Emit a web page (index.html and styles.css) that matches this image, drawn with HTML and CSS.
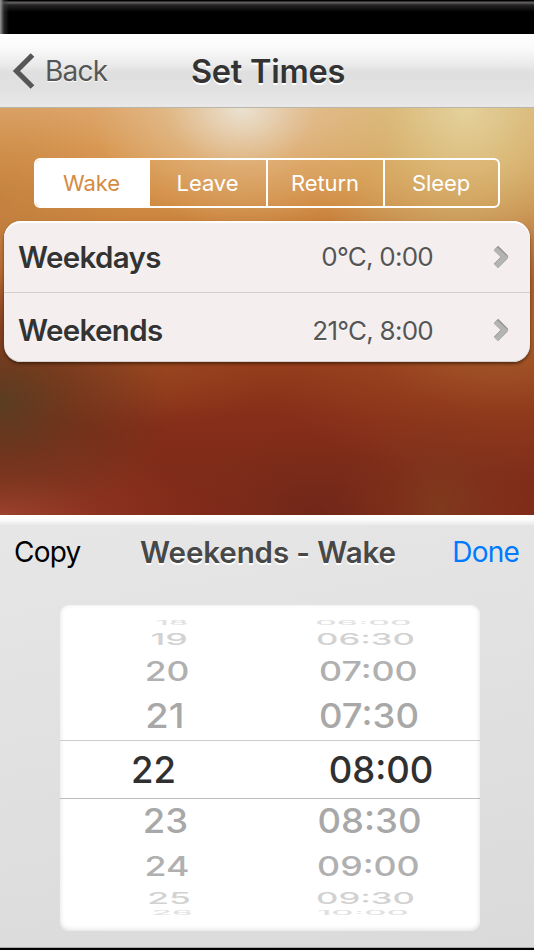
FILE: index.html
```
<!DOCTYPE html>
<html lang="en">
<head>
    <meta charset="UTF-8">
    <meta name="viewport" content="width=device-width, initial-scale=1.0">
    <title>Set Times</title>
    <link rel="stylesheet" href="styles.css">
</head>
<body>
    <div class="status"></div>
    <header class="navbar">
        <a class="back">
            <svg width="24" height="36" viewBox="0 0 24 36"><path d="M21.5 2 L5.5 18 L21.5 34" fill="none" stroke="#565656" stroke-width="5.2"/></svg>
            <span>Back</span>
        </a>
        <h1>Set Times</h1>
    </header>
    <main>
        <div class="tabs">
            <a class="tab active">Wake</a>
            <a class="tab">Leave</a>
            <a class="tab">Return</a>
            <a class="tab">Sleep</a>
        </div>
        <div class="list">
            <div class="item">
                <span class="day">Weekdays</span>
                <span class="value">0°C, 0:00</span>
                <svg class="arrow" width="18" height="26" viewBox="0 0 18 26"><path d="M4 3.8 L13 12.8 L4 21.8" fill="none" stroke="#929292" stroke-width="6" stroke-linejoin="round"/><path d="M3.5 5 L12.6 13.4 L4 22.3" fill="none" stroke="#b5b4b4" stroke-width="5"/></svg>
            </div>
            <div class="item">
                <span class="day">Weekends</span>
                <span class="value">21°C, 8:00</span>
                <svg class="arrow" width="18" height="26" viewBox="0 0 18 26"><path d="M4 3.8 L13 12.8 L4 21.8" fill="none" stroke="#929292" stroke-width="6" stroke-linejoin="round"/><path d="M3.5 5 L12.6 13.4 L4 22.3" fill="none" stroke="#b5b4b4" stroke-width="5"/></svg>
            </div>
        </div>
    </main>
    <section class="sheet">
        <div class="bar">
            <a class="copy">Copy</a>
            <h2>Weekends - Wake</h2>
            <a class="done">Done</a>
        </div>
        <div class="picker">
            <div class="row top4"><span>18</span><span>06:00</span></div>
            <div class="row top3"><span>19</span><span>06:30</span></div>
            <div class="row top2"><span>20</span><span>07:00</span></div>
            <div class="row top1"><span>21</span><span>07:30</span></div>
            <div class="row selected"><span>22</span><span>08:00</span></div>
            <div class="row bottom1"><span>23</span><span>08:30</span></div>
            <div class="row bottom2"><span>24</span><span>09:00</span></div>
            <div class="row bottom3"><span>25</span><span>09:30</span></div>
            <div class="row bottom4"><span>26</span><span>10:00</span></div>
        </div>
    </section>
</body>
</html>
```

FILE: styles.css
```
*{
    box-sizing: border-box;
}
body{
    margin: 0;
    width: 534px;
    height: 950px;
    overflow: hidden;
    display: flex;
    flex-direction: column;
    background-color: black;
    font-family: Inter, "Liberation Sans", sans-serif;
}
h1,h2{
    margin: 0;
    font-weight: 600;
    white-space: nowrap;
}
.status{
    height: 34px;
    background: linear-gradient(to right, #999 0, rgba(60,60,60,0.6) 4px, transparent 9px), linear-gradient(#000 0, #000 1px, #656065 2px, #5a575a 3px, #242424 5px, #000 12px);
}

/* navbar */
.navbar{
    height: 74px;
    display: grid;
    grid-template-columns: 160px 1fr 160px;
    align-items: center;
    padding-top: 1px;
    background: linear-gradient(#fff 0, #fafafa 14px, #e9e9e9 32px, #dfdfdf 38px, #e1e1e1 55px, #e8e8e8 72px);
    border-bottom: 1px solid #b9b5aa;
}
.back{
    display: flex;
    align-items: center;
    padding-left: 11px;
    gap: 10px;
    color: #565656;
    font-size: 28px;
    letter-spacing: -0.8px;
    text-shadow: 0 1px 0 white;
}
.navbar h1{
    text-align: center;
    padding-left: 2px;
    font-size: 32.5px;
    letter-spacing: -0.25px;
    color: #333;
    text-shadow: 0 2px 0 white;
}

/* blurred photo behind the list */
main{
    height: 407px;
    padding: 50px 4px 0;
    background:
        radial-gradient(ellipse 150px 120px at 242px 0, rgba(235,229,215,0.95), rgba(230,207,170,0.45) 50%, rgba(220,180,120,0) 100%),
        radial-gradient(ellipse 170px 190px at 465px 0, rgba(228,214,160,0.9), rgba(216,195,130,0.6) 50%, rgba(210,170,95,0) 100%),
        radial-gradient(ellipse 130px 110px at 0 95px, rgba(188,124,62,0.6), rgba(195,130,65,0) 100%),
        radial-gradient(ellipse 170px 130px at 0 295px, rgba(88,62,34,0.95), rgba(98,55,30,0.55) 45%, rgba(115,45,27,0) 100%),
        radial-gradient(ellipse 200px 90px at 0 407px, rgba(168,68,46,0.95), rgba(155,58,38,0.45) 50%, rgba(140,45,30,0) 100%),
        radial-gradient(ellipse 120px 90px at 315px 407px, rgba(105,38,24,0.7), rgba(112,40,24,0.3) 50%, rgba(120,42,24,0) 100%),
        radial-gradient(ellipse 100px 110px at 440px 400px, rgba(127,60,28,0.85), rgba(130,55,28,0.4) 50%, rgba(132,50,28,0) 100%),
        radial-gradient(ellipse 260px 160px at 500px 215px, rgba(172,105,48,0.8), rgba(160,80,35,0.35) 55%, rgba(150,70,30,0) 100%),
        radial-gradient(ellipse 170px 70px at 130px 250px, rgba(155,78,34,0.7), rgba(150,60,30,0) 100%),
        linear-gradient(#dca468 0, #d8964e 55px, #cd8740 105px, #a85a2a 180px, #943a1c 255px, #862e19 310px, #7f2c1a 360px, #802a1a 407px);
}
.tabs{
    width: 466px;
    height: 50px;
    margin: 0 auto;
    display: grid;
    grid-template-columns: 114px 116px 117px 115px;
    border: 2px solid white;
    border-radius: 6px;
    overflow: hidden;
    background-color: rgba(225,150,65,0.12);
}
.tab{
    display: flex;
    align-items: center;
    justify-content: center;
    padding-right: 1px;
    color: white;
    font-size: 22px;
    letter-spacing: -0.1px;
    border-left: 2px solid white;
}
.tab.active{
    padding-right: 3px;
    background-color: white;
    color: #d48b43;
    border-left: none;
}
.tab.active + .tab{
    border-left: none;
}
.list{
    height: 141px;
    margin-top: 13px;
    border-radius: 17px;
    background-color: #f4eeee;
    box-shadow: inset 0 2px 0 white, inset 0 -1px 0 #d5cfcf, 0 2px 3px rgba(40,20,0,0.6);
}
.item{
    display: grid;
    grid-template-columns: 200px 1fr 96px;
    align-items: center;
    height: 71px;
    padding-left: 14px;
}
.item + .item{
    border-top: 1px solid #d3cfcf;
    height: 70px;
    padding-top: 5px;
}
.day{
    font-size: 29.5px;
    font-weight: 600;
    letter-spacing: -0.65px;
    color: #333;
    text-shadow: 0 1px 0 white;
}
.value{
    text-align: right;
    padding-right: 1px;
    font-size: 26px;
    letter-spacing: -0.75px;
    color: #555;
    text-shadow: 0 1px 0 white;
}
.arrow{
    margin-left: 58px;
}

/* bottom sheet */
.sheet{
    height: 433px;
    border-bottom: 1px solid #aaa;
    background: linear-gradient(#fff 0, #fbfbfb 5px, #ececec 9px, transparent 11px), linear-gradient(170deg, #e6e6e6 20px, #dadada 100%);
}
.bar{
    height: 90px;
    padding: 0 15px 16px 14px;
    display: grid;
    grid-template-columns: 90px 1fr 90px;
    align-items: center;
    font-size: 28px;
    letter-spacing: -0.8px;
}
.bar h2{
    text-align: center;
    padding-left: 3px;
    font-size: 29.5px;
    letter-spacing: -0.1px;
    color: #484848;
    text-shadow: 0 2px 0 white;
}
.done{
    text-align: right;
    color: #007aff;
}
.picker{
    width: 420px;
    height: 326px;
    margin: 0 auto 0 60px;
    padding-top: 10px;
    border-radius: 9px;
    background-color: white;
    box-shadow: inset 0 -1px 5px #ddd;
}
.row{
    display: grid;
    grid-template-columns: 212px 1fr;
    grid-template-rows: 100%;
    align-items: center;
    font-size: 36.5px;
    font-weight: 500;
    line-height: 1;
    color: #a8a8a8;
}
.row span{
    justify-self: center;
}
.selected{
    height: 59px;
    border-top: 1px solid #ccc;
    border-bottom: 1px solid #bbb;
    margin: 3px 0 2px;
    padding-top: 1px;
    color: #303030;
}
.selected span:first-child{
    transform: translateX(-12.5px);
}
.selected span:last-child{
    transform: translateX(5px);
}
/* rows get flatter and paler towards the edges of the wheel */
.top4,.bottom4{
    height: 16px;
    color: #e0e0e0;
}
.top3{
    height: 16px;
    color: #d2d2d2;
}
.bottom3{
    height: 14px;
    color: #d2d2d2;
}
.top2,.bottom2{
    height: 49px;
    color: #b0b0b0;
}
.top1,.bottom1{
    height: 41px;
}
.top4 span:first-child{ transform: translateX(6px) scale(0.85,0.16); }
.top4 span:last-child{ transform: translateX(-13px) scale(0.92,0.16); }
.top3 span:first-child{ transform: translateX(3px) scale(0.98,0.45); }
.top3 span:last-child{ transform: translateX(-10.5px) scale(0.95,0.45); }
.top2 span:first-child{ transform: translateX(1px) scale(0.97,0.75); }
.top2 span:last-child{ transform: translateX(-8px) scale(0.98,0.75); }
.top1 span:first-child{ transform: translateX(-1px) scale(1.04,0.94); }
.top1 span:last-child{ transform: translateX(-7px) scale(1,0.94); }
.bottom1 span:first-child{ transform: translateX(-0.5px) scale(1,0.94); }
.bottom1 span:last-child{ transform: translateX(-6.5px) scale(1,0.94); }
.bottom2 span:first-child{ transform: translateX(1px) scale(0.98,0.75); }
.bottom2 span:last-child{ transform: translateX(-8px) scale(0.98,0.75); }
.bottom3 span:first-child{ transform: translateX(3.5px) scale(0.97,0.45); }
.bottom3 span:last-child{ transform: translateX(-10.5px) scale(0.95,0.45); }
.bottom4 span:first-child{ transform: translateX(6.5px) scale(0.9,0.16); }
.bottom4 span:last-child{ transform: translateX(-13.5px) scale(0.95,0.16); }
```
